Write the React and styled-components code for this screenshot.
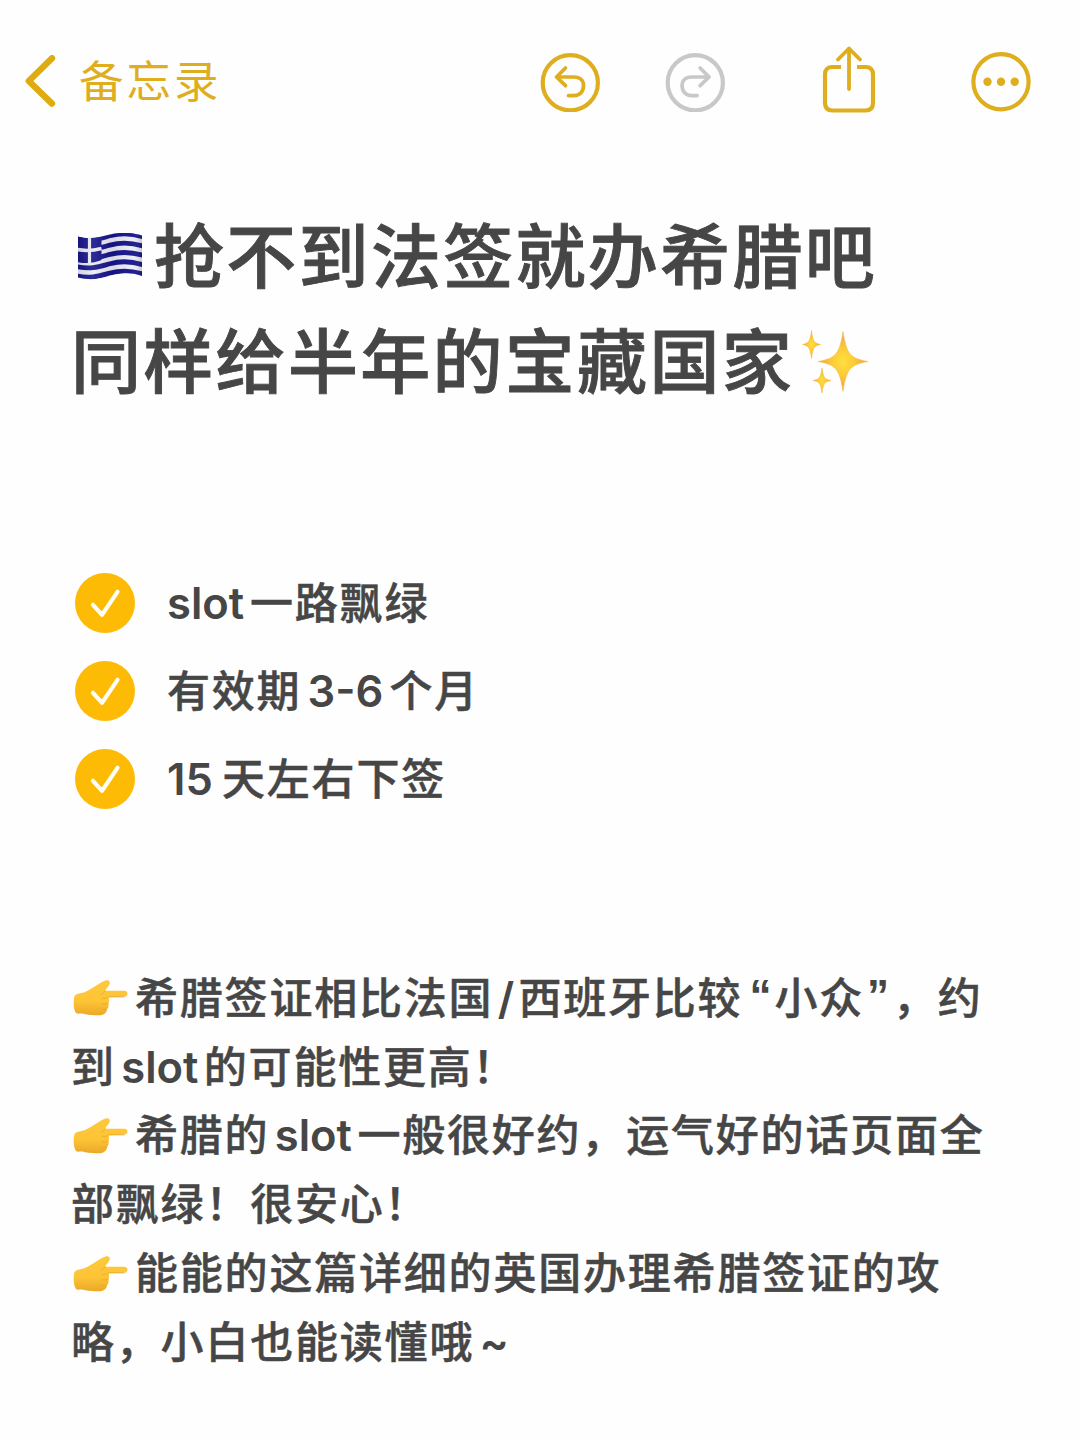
import React from 'react';
import styled, { createGlobalStyle } from 'styled-components';

const GOLD = '#dfae1e';

const checks = [
  [{ latin: 'slot', w: 83 }, '一路飘绿'],
  ['有效期', { latin: '3-6', w: 88, align: 'center' }, '个月'],
  [{ latin: '15', w: 55 }, '天左右下签'],
];

const lines = [
  { hand: true, parts: ['希腊签证相比法国', { latin: '/', w: 25, align: 'center' }, '西班牙比较', { quote: '“', w: 32, align: 'flex-end' }, '小众', { quote: '”', w: 29 }, '，约'] },
  { parts: ['到', { latin: 'slot', w: 88, align: 'center' }, '的可能性更高！'] },
  { hand: true, parts: ['希腊的', { latin: 'slot', w: 88, align: 'center' }, '一般很好约，运气好的话页面全'] },
  { parts: ['部飘绿！很安心！'] },
  { hand: true, parts: ['能能的这篇详细的英国办理希腊签证的攻'] },
  { parts: ['略，小白也能读懂哦', { latin: '~', w: 40, align: 'center' }] },
];

function Parts({ items }) {
  return items.map((p, i) => {
    if (typeof p === 'string') {
      return <Han key={i}>{p}</Han>;
    }
    if (p.quote) {
      return <Quote key={i} $w={p.w} $align={p.align}>{p.quote}</Quote>;
    }
    return <Latin key={i} $w={p.w} $align={p.align}>{p.latin}</Latin>;
  });
}

function UndoIcon({ color, flip }) {
  return (
    <svg width="60" height="60" viewBox="0 0 60 60" fill="none" stroke={color} strokeLinecap="round" strokeLinejoin="round">
      <circle cx="30.3" cy="30.8" r="27.6" strokeWidth="4.2" />
      <g transform={flip ? 'translate(60.6 0) scale(-1 1)' : undefined} strokeWidth="3.7">
        <path d="M25.5 16 L16.5 25 L25.5 33.7" />
        <path d="M17.5 25 H34 C40.5 25 43.5 28.7 43.5 33.7 C43.5 39.2 40 43.6 34 43.6 H28.5" />
      </g>
    </svg>
  );
}

function ShareIcon() {
  return (
    <svg width="54" height="68" viewBox="0 0 54 68" fill="none" stroke={GOLD} strokeWidth="4.2" strokeLinecap="round" strokeLinejoin="round">
      <path d="M19 21 H10.5 Q3 21 3 28.5 V57 Q3 64.5 10.5 64.5 H43.5 Q51 64.5 51 57 V28.5 Q51 21 43.5 21 H35" strokeLinecap="butt" />
      <path d="M27 3 V43" strokeWidth="3.8" />
      <path d="M16 13.5 L27 2.5 L38 13.5" strokeWidth="3.8" />
    </svg>
  );
}

function MoreIcon() {
  return (
    <svg width="60" height="60" viewBox="0 0 60 60">
      <circle cx="30" cy="29.7" r="27.6" fill="none" stroke={GOLD} strokeWidth="4.2" />
      <circle cx="16.5" cy="29.7" r="4.2" fill={GOLD} />
      <circle cx="30" cy="29.7" r="4.2" fill={GOLD} />
      <circle cx="43.7" cy="29.7" r="4.2" fill={GOLD} />
    </svg>
  );
}

// Bandeira da Grécia
function GreekFlag() {
  const wave = (y) => `M0 ${y + 1} C14 ${y + 4} 22 ${y + 1} 33 ${y - 2} S53 ${y - 5} 66 ${y - 1}`;
  return (
    <svg width="66" height="48" viewBox="0 0 66 48">
      <defs>
        <clipPath id="flagShape">
          <path d="M1 3.5 C14 7 22 4 33 1.5 S53 -1 65 2.5 V43 C53 39 44 40 33 43 S14 47.5 1 44.5 Z" />
        </clipPath>
        <linearGradient id="flagShade" x1="0" x2="1" y1="0" y2="0">
          <stop offset="0" stopColor="#000" stopOpacity="0.12" />
          <stop offset="0.25" stopColor="#fff" stopOpacity="0.1" />
          <stop offset="0.55" stopColor="#000" stopOpacity="0.08" />
          <stop offset="0.85" stopColor="#fff" stopOpacity="0.04" />
          <stop offset="1" stopColor="#000" stopOpacity="0.2" />
        </linearGradient>
      </defs>
      <g clipPath="url(#flagShape)">
        <rect width="66" height="48" fill="#ececf6" />
        {[0, 1, 2, 3, 4].map((i) => (
          <path key={i} d={wave(4.8 + i * 9.3)} stroke="#17148c" strokeWidth="4.8" fill="none" />
        ))}
        <path d="M0 3 C10 6 17 5.5 24.5 3.5 V27 C17 30 10 31 0 29 Z" fill="#17148c" />
        <path d="M0 16.5 C10 18.5 17 17.5 24.5 15.5" stroke="#ececf6" strokeWidth="3.6" fill="none" />
        <path d="M12.5 3 V30" stroke="#ececf6" strokeWidth="3.2" />
        <rect width="66" height="48" fill="url(#flagShade)" />
      </g>
    </svg>
  );
}

function Sparkles() {
  const star = (x, y, rx, ry) => {
    const a = rx * 0.14;
    const b = ry * 0.1;
    const c = rx * 0.32;
    const d = ry * 0.22;
    return `M${x} ${y - ry} C${x + a} ${y - d} ${x + c} ${y - b} ${x + rx} ${y} C${x + c} ${y + b} ${x + a} ${y + d} ${x} ${y + ry} C${x - a} ${y + d} ${x - c} ${y + b} ${x - rx} ${y} C${x - c} ${y - b} ${x - a} ${y - d} ${x} ${y - ry} Z`;
  };
  return (
    <svg width="68" height="66" viewBox="0 0 68 66">
      <defs>
        <radialGradient id="spark">
          <stop offset="0" stopColor="#ffe03f" />
          <stop offset="0.45" stopColor="#fccb38" />
          <stop offset="1" stopColor="#ee9a5c" />
        </radialGradient>
      </defs>
      <g fill="url(#spark)" stroke="#f8bd3c" strokeWidth="0.6" strokeLinejoin="round">
        <path d={star(41, 32.5, 25, 30)} />
        <path d={star(9.5, 15.5, 9, 14)} />
        <path d={star(20, 51.5, 9, 12.5)} />
      </g>
    </svg>
  );
}

function Hand() {
  return (
    <svg width="56" height="38" viewBox="0 0 56 38">
      <defs>
        <linearGradient id="skin" x1="0" x2="0" y1="0" y2="1">
          <stop offset="0" stopColor="#fdc93c" />
          <stop offset="0.6" stopColor="#fdc436" />
          <stop offset="1" stopColor="#eba827" />
        </linearGradient>
      </defs>
      <path d="M1.5 17 C4 14 9 14.5 13 12.5 C20 9.5 26 4 32.5 1.6 C35.5 0.6 37.8 2.6 36.4 5.4 C35.3 7.8 33 9.5 32 11.8 H51.5 C55.5 11.8 55.5 17.6 51.5 17.6 L35.5 18.2 C36.6 20.5 36.4 22.5 35.4 24 C36 26.5 35.5 28.8 34 30 C34 33.5 31 36 27 36.2 C20 36.6 14 36 9.5 34.6 C7 34 5 35.5 3 34 C0.3 30.5 0.2 22 1.5 17 Z" fill="url(#skin)" />
      <path d="M35.5 18.2 C34 19.4 31 19.8 29 19.3 M35.2 24.2 C33 25.3 31 25.3 29 24.8 M33.8 30 C31.5 30.8 30 30.6 28 30" fill="none" stroke="#e9ab2b" strokeWidth="0.9" strokeLinecap="round" />
      <path d="M32 11.8 C31 13.6 29.5 15 28 15.6" fill="none" stroke="#e9ab2b" strokeWidth="0.9" strokeLinecap="round" />
      <path d="M36 17.8 H51.5" stroke="#eca92e" strokeWidth="1" />
    </svg>
  );
}

function App() {
  return (
    <Page>
      <GlobalStyle />
      <Toolbar>
        <Back>
          <svg width="32" height="54" viewBox="0 0 32 54" fill="none" stroke="#e0ab0e" strokeWidth="6.4" strokeLinecap="round" strokeLinejoin="round">
            <path d="M28 3.2 L4.8 26 L28 48.6" />
          </svg>
          <BackText>备忘录</BackText>
        </Back>
        <Actions>
          <UndoIcon color={GOLD} />
          <UndoIcon color="#c8c8c8" flip />
          <ShareIcon />
          <MoreIcon />
        </Actions>
      </Toolbar>

      <Title>
        <TitleLine><FlagBox><GreekFlag /></FlagBox><TitleText>抢不到法签就办希腊吧</TitleText></TitleLine>
        <TitleLine><TitleText>同样给半年的宝藏国家</TitleText><SparkBox><Sparkles /></SparkBox></TitleLine>
      </Title>

      <CheckList>
        {checks.map((items, i) => (
          <CheckItem key={i}>
            <Check>
              <svg width="60" height="60" viewBox="0 0 60 60" fill="none" stroke="#fffdf4" strokeWidth="4.2" strokeLinecap="round" strokeLinejoin="round">
                <path d="M18 31.8 L27 41.8 L42.5 18.8" />
              </svg>
            </Check>
            <Parts items={items} />
          </CheckItem>
        ))}
      </CheckList>

      <Body>
        {lines.map((line, i) => (
          <BodyLine key={i}>
            {line.hand && <HandBox><Hand /></HandBox>}
            <Parts items={line.parts} />
          </BodyLine>
        ))}
      </Body>
    </Page>
  );
}

export default App;

const GlobalStyle = createGlobalStyle`
body {
  margin: 0;
  background: #fefefe;
}
svg {
  display: block;
  flex: none;
}
`

const Page = styled.div`
box-sizing: border-box;
width: 1080px;
height: 1440px;
overflow: hidden;
background: #fefefe;
color: #464646;
font-family: "Noto Sans CJK SC", sans-serif;
`

const Toolbar = styled.div`
display: flex;
justify-content: space-between;
align-items: center;
height: 164px;
padding: 0 49px 0 24px;
`

const Back = styled.div`
display: flex;
align-items: center;
gap: 23px;
`

const BackText = styled.span`
padding-bottom: 7px;
font-size: 44.5px;
line-height: 60px;
letter-spacing: 3px;
color: ${GOLD};
`

const Actions = styled.div`
display: flex;
align-items: center;

svg:nth-child(2) {
  margin-left: 65px;
}
svg:nth-child(3) {
  margin: -4px 0 0 97px;
}
svg:nth-child(4) {
  margin-left: 95px;
}
`

const Title = styled.h1`
margin: 0;
padding: 41px 0 0 71px;
font-size: 70px;
font-weight: 500;
letter-spacing: 2.3px;
`

const TitleLine = styled.div`
display: flex;
align-items: center;
height: 104.5px;
`

const TitleText = styled.span`
padding-bottom: 9px;
line-height: 95px;
white-space: nowrap;
-webkit-text-stroke: 0.9px #464646;
`

const FlagBox = styled.span`
margin: 0 11px 0 6px;
`

const SparkBox = styled.span`
margin-left: 8px;
`

const CheckList = styled.div`
padding: 145px 0 0 75px;
`

const CheckItem = styled.div`
display: flex;
align-items: center;
height: 88px;
`

const Check = styled.span`
width: 60px;
height: 60px;
margin-right: 32px;
border-radius: 50%;
background: #fdbb06;
`

const Han = styled.span`
padding-bottom: 7px;
font-size: 43px;
font-weight: 500;
line-height: 60px;
letter-spacing: 1.8px;
white-space: nowrap;
-webkit-text-stroke: 0.5px #464646;
`

const Latin = styled.span`
display: flex;
justify-content: ${(p) => p.$align || 'flex-start'};
box-sizing: border-box;
width: ${(p) => p.$w}px;
padding-bottom: 1px;
font-family: Inter, sans-serif;
font-size: 43.5px;
font-weight: 600;
line-height: 60px;
`

const Quote = styled(Latin)`
padding: 0 3px 4px;
font-family: "Liberation Sans", sans-serif;
font-size: 44px;
font-weight: 700;
`

const Body = styled.div`
padding: 141px 0 0 71px;
`

const BodyLine = styled.div`
display: flex;
align-items: center;
height: 68.8px;
`

const HandBox = styled.span`
margin: 0 6px 0 2px;
`
